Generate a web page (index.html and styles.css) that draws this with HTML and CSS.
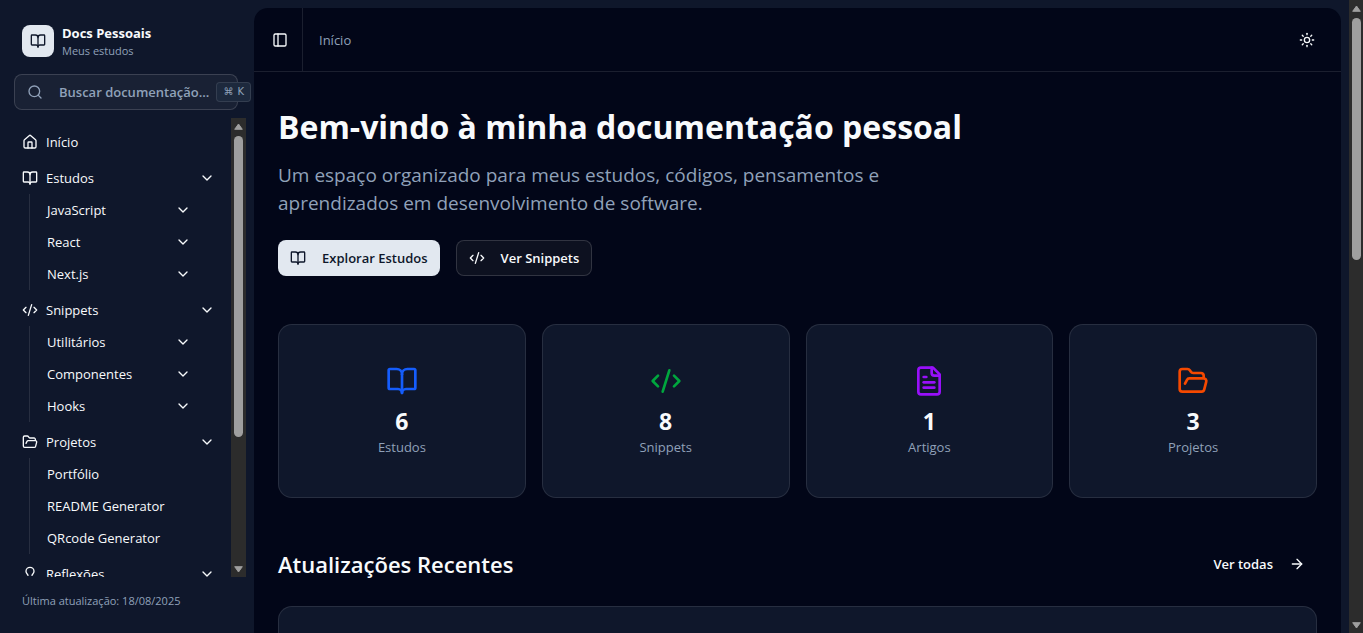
FILE: index.html
```html
<!DOCTYPE html>
<html lang="pt-BR">
<head>
<meta charset="utf-8">
<meta name="viewport" content="width=device-width, initial-scale=1">
<title>Docs Pessoais</title>
<link rel="stylesheet" href="styles.css">
</head>
<body>
<svg class="sprite" aria-hidden="true">
  <symbol id="book" viewBox="0 0 24 24"><path d="M12 7v14"/><path d="M3 18a1 1 0 0 1-1-1V4a1 1 0 0 1 1-1h5a4 4 0 0 1 4 4 4 4 0 0 1 4-4h5a1 1 0 0 1 1 1v13a1 1 0 0 1-1 1h-6a3 3 0 0 0-3 3 3 3 0 0 0-3-3z"/></symbol>
  <symbol id="search" viewBox="0 0 24 24"><circle cx="11" cy="11" r="8"/><path d="m21 21-4.3-4.3"/></symbol>
  <symbol id="house" viewBox="0 0 24 24"><path d="M15 21v-8a1 1 0 0 0-1-1h-4a1 1 0 0 0-1 1v8"/><path d="M3 10a2 2 0 0 1 .709-1.528l7-5.999a2 2 0 0 1 2.582 0l7 5.999A2 2 0 0 1 21 10v9a2 2 0 0 1-2 2H5a2 2 0 0 1-2-2z"/></symbol>
  <symbol id="chevron" viewBox="0 0 24 24"><path d="m6 9 6 6 6-6"/></symbol>
  <symbol id="code" viewBox="0 0 24 24"><path d="m18 16 4-4-4-4"/><path d="m6 8-4 4 4 4"/><path d="m14.500 4-5 16"/></symbol>
  <symbol id="folder" viewBox="0 0 24 24"><path d="m6 14 1.500-2.900A2 2 0 0 1 9.240 10H20a2 2 0 0 1 1.940 2.500l-1.540 6a2 2 0 0 1-1.950 1.500H4a2 2 0 0 1-2-2V5a2 2 0 0 1 2-2h3.900a2 2 0 0 1 1.690.9l.810 1.200a2 2 0 0 0 1.670.9H18a2 2 0 0 1 2 2v2"/></symbol>
  <symbol id="bulb" viewBox="0 0 24 24"><path d="M15 14c.2-1 .7-1.700 1.500-2.500 1-.9 1.500-2.200 1.500-3.500A6 6 0 0 0 6 8c0 1 .2 2.200 1.500 3.500.7.7 1.300 1.500 1.500 2.500"/><path d="M9 18h6"/><path d="M10 22h4"/></symbol>
  <symbol id="file" viewBox="0 0 24 24"><path d="M15 2H6a2 2 0 0 0-2 2v16a2 2 0 0 0 2 2h12a2 2 0 0 0 2-2V7Z"/><path d="M14 2v4a2 2 0 0 0 2 2h4"/><path d="M10 9H8"/><path d="M16 13H8"/><path d="M16 17H8"/></symbol>
  <symbol id="panel" viewBox="0 0 24 24"><rect width="18" height="18" x="3" y="3" rx="2"/><path d="M9 3v18"/></symbol>
  <symbol id="sun" viewBox="0 0 24 24"><circle cx="12" cy="12" r="4"/><path d="M12 2v2"/><path d="M12 20v2"/><path d="m4.930 4.930 1.410 1.410"/><path d="m17.660 17.660 1.410 1.410"/><path d="M2 12h2"/><path d="M20 12h2"/><path d="m6.340 17.660-1.410 1.410"/><path d="m19.070 4.930-1.410 1.410"/></symbol>
  <symbol id="arrow" viewBox="0 0 24 24"><path d="M5 12h14"/><path d="m12 5 7 7-7 7"/></symbol>
  <symbol id="up" viewBox="0 0 9 7"><path d="M4.500 1 8.300 6.300H.7z"/></symbol>
</svg>

<aside class="sidebar">
  <a class="brand" href="#">
    <span class="brand-mark"><svg class="icon"><use href="#book"/></svg></span>
    <span class="brand-text"><strong class="brand-name">Docs Pessoais</strong><span class="brand-sub">Meus estudos</span></span>
  </a>
  <button class="search" type="button">
    <svg class="icon"><use href="#search"/></svg>
    <span>Buscar documentação...</span>
    <kbd class="shortcut"><span>⌘</span><span>K</span></kbd>
  </button>
  <div class="nav-area">
    <nav class="nav" aria-label="Documentação">
      <a class="item" href="#"><svg class="icon"><use href="#house"/></svg>Início</a>
      <div class="group">
        <button class="item" type="button"><svg class="icon"><use href="#book"/></svg>Estudos<svg class="icon end"><use href="#chevron"/></svg></button>
        <div class="sub">
          <button class="item" type="button">JavaScript<svg class="icon end"><use href="#chevron"/></svg></button>
          <button class="item" type="button">React<svg class="icon end"><use href="#chevron"/></svg></button>
          <button class="item" type="button">Next.js<svg class="icon end"><use href="#chevron"/></svg></button>
        </div>
      </div>
      <div class="group">
        <button class="item" type="button"><svg class="icon"><use href="#code"/></svg>Snippets<svg class="icon end"><use href="#chevron"/></svg></button>
        <div class="sub">
          <button class="item" type="button">Utilitários<svg class="icon end"><use href="#chevron"/></svg></button>
          <button class="item" type="button">Componentes<svg class="icon end"><use href="#chevron"/></svg></button>
          <button class="item" type="button">Hooks<svg class="icon end"><use href="#chevron"/></svg></button>
        </div>
      </div>
      <div class="group">
        <button class="item" type="button"><svg class="icon"><use href="#folder"/></svg>Projetos<svg class="icon end"><use href="#chevron"/></svg></button>
        <div class="sub">
          <a class="item" href="#">Portfólio</a>
          <a class="item" href="#">README Generator</a>
          <a class="item" href="#">QRcode Generator</a>
        </div>
      </div>
      <div class="group">
        <button class="item" type="button"><svg class="icon"><use href="#bulb"/></svg>Reflexões<svg class="icon end"><use href="#chevron"/></svg></button>
      </div>
    </nav>
    <div class="scrollbar" aria-hidden="true"><svg class="tip"><use href="#up"/></svg><div class="track"><div class="thumb nav-thumb"></div></div><svg class="tip down"><use href="#up"/></svg></div>
  </div>
  <p class="updated">Última atualização: 18/08/2025</p>
</aside>

<main class="main">
  <header class="topbar">
    <div class="toggle-cell"><button class="icon-button" type="button" aria-label="Alternar barra lateral"><svg class="icon"><use href="#panel"/></svg></button></div>
    <a class="crumb" href="#">Início</a>
    <button class="icon-button theme" type="button" aria-label="Alternar tema"><svg class="icon"><use href="#sun"/></svg></button>
  </header>
  <div class="content">
    <section class="hero">
      <h1>Bem-vindo à minha documentação pessoal</h1>
      <p class="lead">Um espaço organizado para meus estudos, códigos, pensamentos e aprendizados em desenvolvimento de software.</p>
      <div class="actions">
        <a class="button primary" href="#"><svg class="icon"><use href="#book"/></svg>Explorar Estudos</a>
        <a class="button outline" href="#"><svg class="icon"><use href="#code"/></svg>Ver Snippets</a>
      </div>
    </section>
    <section class="stats">
      <div class="card stat"><svg class="icon large blue"><use href="#book"/></svg><strong>6</strong><span>Estudos</span></div>
      <div class="card stat"><svg class="icon large green"><use href="#code"/></svg><strong>8</strong><span>Snippets</span></div>
      <div class="card stat"><svg class="icon large purple"><use href="#file"/></svg><strong>1</strong><span>Artigos</span></div>
      <div class="card stat"><svg class="icon large orange"><use href="#folder"/></svg><strong>3</strong><span>Projetos</span></div>
    </section>
    <section class="recent">
      <div class="recent-head"><h2>Atualizações Recentes</h2><a class="button ghost" href="#">Ver todas<svg class="icon"><use href="#arrow"/></svg></a></div>
      <div class="card entry"></div>
    </section>
  </div>
</main>
<div class="scrollbar page-scroll" aria-hidden="true"><svg class="tip"><use href="#up"/></svg><div class="track"><div class="thumb page-thumb"></div></div><svg class="tip down"><use href="#up"/></svg></div>
</body>
</html>
```
FILE: styles.css
```css
:root {
  --bg: #020618;
  --panel: #0f172b;
  --text: #f8fafc;
  --muted: #90a1b9;
  --line: rgba(255, 255, 255, 0.1);
  --light: #e2e8f0;
}
* { box-sizing: border-box; }
body {
  margin: 0;
  display: flex;
  height: 100vh;
  overflow: hidden;
  background: var(--panel);
  color: var(--text);
  font: 13px/20px "Open Sans", "Noto Sans", sans-serif;
}
h1, h2, p { margin: 0; }
a { color: inherit; text-decoration: none; }
button { border: 0; padding: 0; background: none; color: inherit; font: inherit; text-align: left; }
.sprite { position: absolute; width: 0; height: 0; }
.icon {
  width: 16px;
  height: 16px;
  flex: none;
  fill: none;
  stroke: currentColor;
  stroke-width: 2;
  stroke-linecap: round;
  stroke-linejoin: round;
}

.sidebar { width: 254px; flex: none; display: flex; flex-direction: column; padding: 16px 8px 0 14px; }
.brand { display: flex; align-items: center; gap: 8px; height: 50px; padding: 0 8px; }
.brand-mark {
  display: grid;
  place-items: center;
  width: 32px;
  height: 32px;
  border-radius: 8px;
  background: var(--light);
  color: var(--panel);
}
.brand-text { display: grid; }
.brand-name { font-weight: 700; }
.brand-sub { font-size: 11px; line-height: 16px; color: var(--muted); }
.search {
  position: relative;
  display: flex;
  align-items: center;
  gap: 16px;
  height: 36px;
  margin: 8px 8px 8px 0;
  padding: 0 12px;
  border: 1px solid rgba(255, 255, 255, 0.15);
  border-radius: 8px;
  background: rgba(255, 255, 255, 0.045);
  color: var(--muted);
  font-weight: 600;
  white-space: nowrap;
}
.shortcut {
  position: absolute;
  top: 7px;
  right: -14px;
  display: flex;
  align-items: center;
  gap: 4px;
  height: 20px;
  padding: 0 6px;
  border: 1px solid var(--line);
  border-radius: 4px;
  background: #1d293d;
  font: 10px/16px "DejaVu Sans", sans-serif;
}
.nav-area { flex: 1; min-height: 0; display: flex; }
.nav { flex: 1; min-width: 0; overflow: hidden; padding: 8px 8px 0 0; display: flex; flex-direction: column; gap: 4px; }
.item { display: flex; align-items: center; gap: 8px; width: 100%; height: 32px; padding: 0 8px; font-weight: 500; flex: none; }
.end { margin-left: auto; }
.group { flex: none; }
.sub { margin: 0 24px 0 15px; padding-left: 9px; border-left: 1px solid var(--line); }
.updated { height: 56px; padding: 16px 8px 0; font-size: 11px; line-height: 16px; color: var(--muted); }

.scrollbar { width: 15px; flex: none; display: flex; flex-direction: column; align-items: center; background: #2c2c2c; padding: 5px 0 4px; }
.tip { width: 9px; height: 7px; flex: none; fill: #9f9f9f; stroke: #9f9f9f; stroke-linejoin: round; }
.down { transform: rotate(180deg); }
.track { flex: 1; width: 9px; padding: 6px 0; }
.thumb { border-radius: 5px; background: #9f9f9f; }
.nav-thumb { height: 71%; }
.page-thumb { height: 40.5%; }
.page-scroll { width: 14px; }

.main { flex: 1; min-width: 0; margin: 8px 8px 0 0; border-radius: 14px 14px 0 0; background: var(--bg); overflow: hidden; }
.topbar { display: flex; align-items: center; height: 64px; border-bottom: 1px solid var(--line); padding-right: 16px; }
.toggle-cell { display: grid; place-items: center; align-self: stretch; width: 49px; padding-left: 4px; border-right: 1px solid var(--line); }
.icon-button { display: grid; place-items: center; width: 36px; height: 36px; }
.toggle-cell .icon-button { width: 28px; }
.crumb { margin-left: 16px; color: var(--muted); }
.theme { margin-left: auto; }
.content { display: grid; gap: 48px; padding: 32px 24px; }
h1 { font-size: 32px; line-height: 46px; font-weight: 700; }
.lead { max-width: 640px; margin-top: 11px; font-size: 19px; line-height: 28px; color: var(--muted); }
.actions { display: flex; gap: 16px; margin-top: 23px; }
.button { display: flex; align-items: center; gap: 16px; height: 36px; padding: 0 12px; border-radius: 8px; font-weight: 600; }
.primary { background: var(--light); color: var(--panel); }
.outline { border: 1px solid rgba(255, 255, 255, 0.15); background: #0d1120; }
.card { border: 1px solid var(--line); border-radius: 14px; background: var(--panel); }
.stats { display: grid; grid-template-columns: repeat(4, 1fr); gap: 16px; }
.stat { display: flex; flex-direction: column; align-items: center; padding: 40px 24px; color: var(--muted); }
.stat strong { margin-top: 8px; font-size: 23px; line-height: 32px; color: var(--text); }
.large { width: 32px; height: 32px; }
.blue { color: #155dfc; }
.green { color: #00a63e; }
.purple { color: #9810fa; }
.orange { color: #f54900; }
.recent-head { display: flex; align-items: center; justify-content: space-between; margin-bottom: 24px; }
h2 { font-size: 22px; line-height: 32px; font-weight: 600; }
.entry { height: 120px; }
```
